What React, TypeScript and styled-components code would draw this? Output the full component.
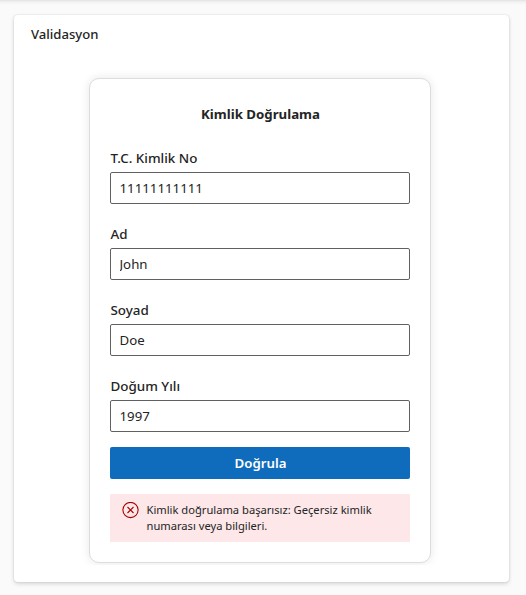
import React, { useState } from "react";
import styled, { createGlobalStyle } from "styled-components";

const GlobalStyle = createGlobalStyle`
  *, *::before, *::after { box-sizing: border-box; }
  body {
    margin: 0;
    background: #fafafa;
    color: #242424;
    font-family: "Segoe UI", "Noto Sans", "Open Sans", sans-serif;
    font-size: 13.25px;
    overflow: hidden;
  }
`;

const Page = styled.main`
  height: 595px;
  padding: 15px 17px 13px 14px;
  background: linear-gradient(#e3e3e3 0, #eaeaea 1px, #f2f2f2 2px, #f7f7f7 4px, #fafafa 5px);
`;

const Panel = styled.section`
  height: 567px;
  padding: 9px 16px 0 17px;
  background: #fff;
  border-radius: 4px;
  box-shadow: 0 0 2px rgba(0, 0, 0, 0.14), 0 2px 4px rgba(0, 0, 0, 0.14);
`;

const PanelTitle = styled.h2`
  margin: 0;
  font-size: 13.1px;
  font-weight: 500;
  line-height: 20px;
`;

const PanelBody = styled.div`
  display: flex;
  justify-content: center;
  height: 506px;
  margin-top: 15px;
  overflow: hidden;
`;

const Card = styled.form`
  display: flex;
  flex-direction: column;
  width: 342px;
  height: 485px;
  margin: 19px 5px 0 0;
  padding: 20px;
  background: #fff;
  border: 1px solid #ddd;
  border-radius: 10px;
  box-shadow: 0 0 10px rgba(0, 0, 0, 0.1);
`;

const CardTitle = styled.h3`
  margin: 5px 0 24px;
  padding-left: 2px;
  font-size: 13.25px;
  font-weight: 700;
  line-height: 20px;
  text-align: center;
`;

const Field = styled.label`
  display: block;
  height: 61px;
  margin-bottom: 15px;
`;

const FieldLabel = styled.span`
  display: block;
  height: 24px;
  padding-left: 1px;
  font-size: 13.4px;
  font-weight: 500;
  line-height: 20px;
`;

const Input = styled.input`
  display: block;
  width: 100%;
  height: 32px;
  padding: 0 9px;
  border: 1px solid #616161;
  border-radius: 2px;
  background: #fff;
  color: #242424;
  font: inherit;
  outline: none;
`;

const SubmitButton = styled.button`
  height: 32px;
  margin-top: -5px;
  padding: 0 0 0 2px;
  border: 0;
  border-radius: 2px;
  background: #0f6cbd;
  color: #fff;
  font: inherit;
  font-weight: 600;
  line-height: 32px;
`;

const ErrorMessage = styled.div`
  display: flex;
  gap: 8px;
  height: 48px;
  margin-top: 15px;
  padding: 8px 12px;
  background: #fde7e9;
  font-size: 11.17px;
  line-height: 16px;
`;

const ErrorIcon = styled.svg`
  flex: none;
  width: 17px;
  height: 17px;
  fill: none;
  stroke: #a80000;
  stroke-width: 1.1;
`;

const fields = [
  { name: "identity", label: "T.C. Kimlik No", value: "11111111111" },
  { name: "firstName", label: "Ad", value: "John" },
  { name: "lastName", label: "Soyad", value: "Doe" },
  { name: "birthYear", label: "Doğum Yılı", value: "1997" },
];

export default function App() {
  const [values, setValues] = useState<Record<string, string>>(
    Object.fromEntries(fields.map((f) => [f.name, f.value]))
  );

  return (
    <>
      <GlobalStyle />
      <Page>
        <Panel>
          <PanelTitle>Validasyon</PanelTitle>
          <PanelBody>
            <Card onSubmit={(e) => e.preventDefault()}>
              <CardTitle>Kimlik Doğrulama</CardTitle>
              {fields.map((f) => (
                <Field key={f.name}>
                  <FieldLabel>{f.label}</FieldLabel>
                  <Input
                    value={values[f.name]}
                    spellCheck={false}
                    onChange={(e) => setValues({ ...values, [f.name]: e.target.value })}
                  />
                </Field>
              ))}
              <SubmitButton type="submit">Doğrula</SubmitButton>
              <ErrorMessage role="alert">
                <ErrorIcon viewBox="0 0 17 17">
                  <circle cx="8.5" cy="8" r="7.6" />
                  <path d="M5.5 5l6 6M11.5 5l-6 6" />
                </ErrorIcon>
                <span>
                  Kimlik doğrulama başarısız: Geçersiz kimlik
                  <br />
                  numarası veya bilgileri.
                </span>
              </ErrorMessage>
            </Card>
          </PanelBody>
        </Panel>
      </Page>
    </>
  );
}
